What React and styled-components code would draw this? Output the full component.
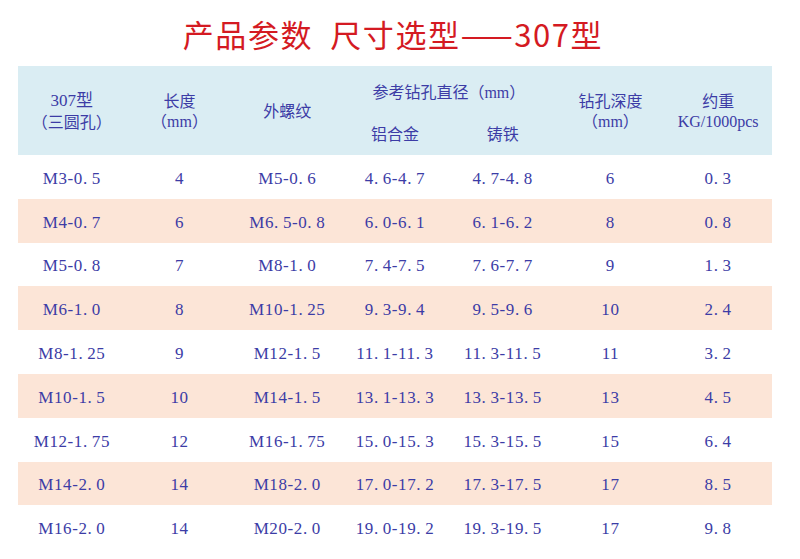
import React from "react";
import styled, { createGlobalStyle } from "styled-components";

const Global = createGlobalStyle`
  html, body { margin: 0; padding: 0; background: #ffffff; }
  body { font-family: "Liberation Serif", "Noto Sans CJK SC", serif; }
`;

const Page = styled.div`
  width: 800px;
  height: 559px;
  background: #fff;
  display: flex;
  flex-direction: column;
  padding-left: 18px;
  box-sizing: border-box;
`;

const Title = styled.h1`
  margin: 0;
  width: 754px;
  height: 66px;
  display: flex;
  align-items: center;
  justify-content: center;
  padding-bottom: 0;
  padding-right: 4px;
  box-sizing: border-box;
  font-family: "Noto Sans CJK SC", sans-serif;
  font-weight: 400;
  font-size: 31px;
  letter-spacing: 1.6px;
  color: #d41a22;
  white-space: pre;
`;

const Table = styled.div`
  width: 754px;
  display: flex;
  flex-direction: column;
  color: #3c3ca6;
`;

const Head = styled.div`
  display: grid;
  grid-template-columns: repeat(7, 1fr);
  grid-template-rows: 45px 44px;
  background: #daedf3;
  font-family: "Noto Sans CJK SC", sans-serif;
  font-size: 16px;
`;

const HeadCell = styled.div`
  grid-column: ${(p) => p.col} / span ${(p) => p.span || 1};
  grid-row: ${(p) => p.row} / span ${(p) => p.rows || 1};
  display: flex;
  flex-direction: column;
  align-items: center;
  justify-content: center;
  line-height: 21px;
  padding-top: ${(p) => p.pt || 0}px;
  box-sizing: border-box;
  text-align: center;
`;

const Sub = styled.span`
  font-family: "Liberation Serif", "Noto Sans CJK SC", serif;
  font-size: ${(p) => p.size || 16}px;
  white-space: nowrap;
`;

const Row = styled.div`
  display: grid;
  grid-template-columns: repeat(7, 1fr);
  height: 43.8px;
  background: ${(p) => (p.striped ? "#fce5d7" : "#ffffff")};
  align-items: center;
`;

const Cell = styled.div`
  text-align: center;
  font-family: "Liberation Serif", serif;
  font-size: 17px;
  letter-spacing: 0.6px;
  padding-top: 4px;
  white-space: nowrap;
`;

const rows = [
  ["M3-0.5", "4", "M5-0.6", "4.6-4.7", "4.7-4.8", "6", "0.3"],
  ["M4-0.7", "6", "M6.5-0.8", "6.0-6.1", "6.1-6.2", "8", "0.8"],
  ["M5-0.8", "7", "M8-1.0", "7.4-7.5", "7.6-7.7", "9", "1.3"],
  ["M6-1.0", "8", "M10-1.25", "9.3-9.4", "9.5-9.6", "10", "2.4"],
  ["M8-1.25", "9", "M12-1.5", "11.1-11.3", "11.3-11.5", "11", "3.2"],
  ["M10-1.5", "10", "M14-1.5", "13.1-13.3", "13.3-13.5", "13", "4.5"],
  ["M12-1.75", "12", "M16-1.75", "15.0-15.3", "15.3-15.5", "15", "6.4"],
  ["M14-2.0", "14", "M18-2.0", "17.0-17.2", "17.3-17.5", "17", "8.5"],
  ["M16-2.0", "14", "M20-2.0", "19.0-19.2", "19.3-19.5", "17", "9.8"],
];

const fmt = (s) => s.replace(/\./g, ".\u2009");

export default function App() {
  return (
    <>
      <Global />
      <Page>
        <Title>{"产品参数\u2002尺寸选型——307型"}</Title>
        <Table>
          <Head>
            <HeadCell col={1} row={1} rows={2}>
              <Sub size={17}>307型</Sub>
              <span>（三圆孔）</span>
            </HeadCell>
            <HeadCell col={2} row={1} rows={2}>
              <span>长度</span>
              <Sub>（mm）</Sub>
            </HeadCell>
            <HeadCell col={3} row={1} rows={2}>
              <span>外螺纹</span>
            </HeadCell>
            <HeadCell col={4} span={2} row={1} pt={6}>
              <span>
                参考钻孔直径<Sub>（mm）</Sub>
              </span>
            </HeadCell>
            <HeadCell col={4} row={2}>
              <span>铝合金</span>
            </HeadCell>
            <HeadCell col={5} row={2}>
              <span>铸铁</span>
            </HeadCell>
            <HeadCell col={6} row={1} rows={2}>
              <span>钻孔深度</span>
              <Sub>（mm）</Sub>
            </HeadCell>
            <HeadCell col={7} row={1} rows={2}>
              <span>约重</span>
              <Sub>KG/1000pcs</Sub>
            </HeadCell>
          </Head>
          {rows.map((r, i) => (
            <Row key={i} striped={i % 2 === 1}>
              {r.map((c, j) => (
                <Cell key={j}>{fmt(c)}</Cell>
              ))}
            </Row>
          ))}
        </Table>
      </Page>
    </>
  );
}
